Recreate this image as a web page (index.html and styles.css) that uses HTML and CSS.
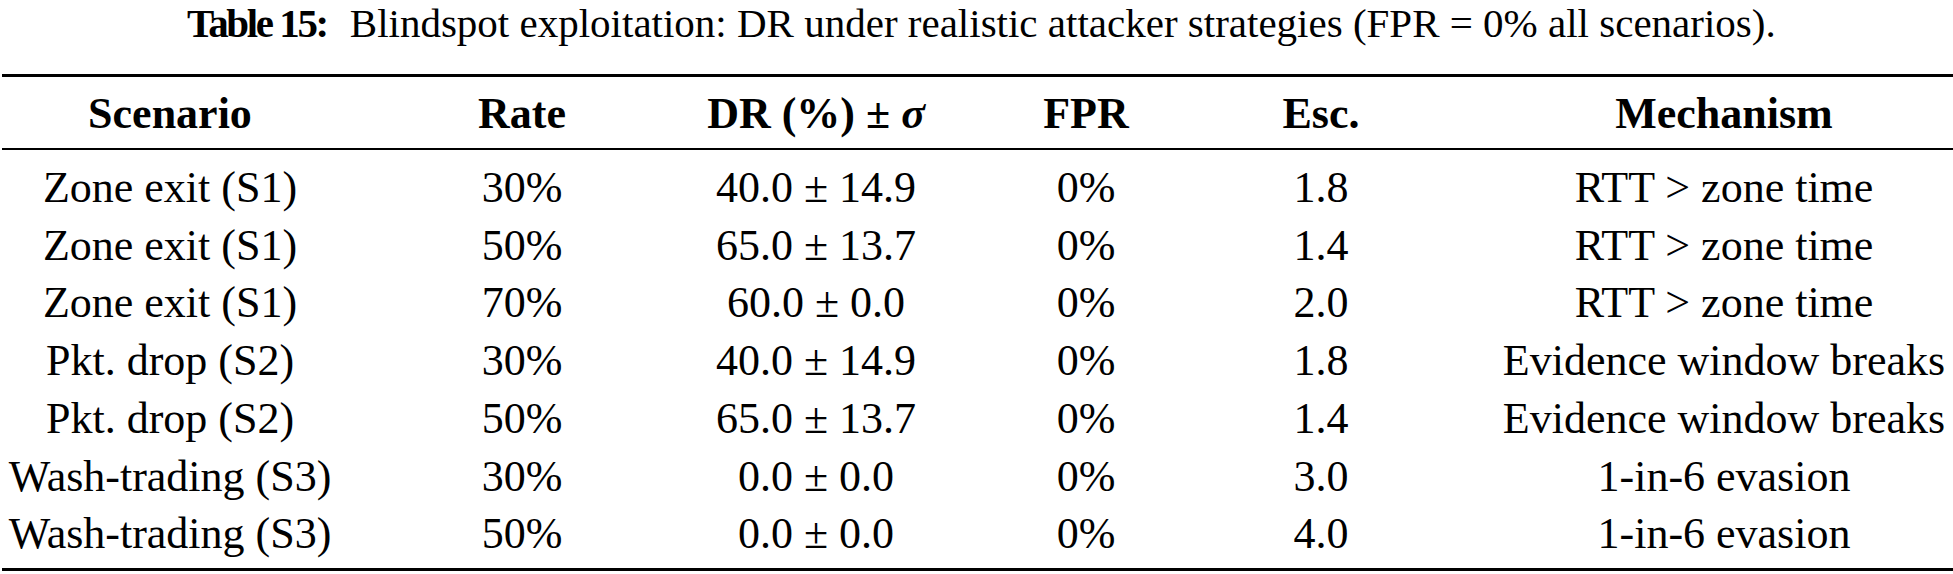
FILE: index.html
```html
<!DOCTYPE html>
<html lang="en">
<head>
<meta charset="utf-8">
<title>Table 15</title>
<link rel="stylesheet" href="styles.css">
</head>
<body>
<div class="page">
  <p class="caption"><span class="cap-label">Table 15:</span>Blindspot exploitation: DR under realistic attacker strategies (FPR = 0% all scenarios).</p>
  <div class="table">
    <div class="rule heavy"></div>
    <div class="head first">Scenario</div>
    <div class="head">Rate</div>
    <div class="head">DR (%) ± <i>σ</i></div>
    <div class="head">FPR</div>
    <div class="head">Esc.</div>
    <div class="head">Mechanism</div>
    <div class="rule light"></div>

    <div class="cell top">Zone exit (S1)</div><div class="cell top">30%</div><div class="cell top">40.0 ± 14.9</div><div class="cell top">0%</div><div class="cell top">1.8</div><div class="cell top">RTT &gt; zone time</div>
    <div class="cell">Zone exit (S1)</div><div class="cell">50%</div><div class="cell">65.0 ± 13.7</div><div class="cell">0%</div><div class="cell">1.4</div><div class="cell">RTT &gt; zone time</div>
    <div class="cell">Zone exit (S1)</div><div class="cell">70%</div><div class="cell">60.0 ± 0.0</div><div class="cell">0%</div><div class="cell">2.0</div><div class="cell">RTT &gt; zone time</div>
    <div class="cell">Pkt. drop (S2)</div><div class="cell">30%</div><div class="cell">40.0 ± 14.9</div><div class="cell">0%</div><div class="cell">1.8</div><div class="cell">Evidence window breaks</div>
    <div class="cell">Pkt. drop (S2)</div><div class="cell">50%</div><div class="cell">65.0 ± 13.7</div><div class="cell">0%</div><div class="cell">1.4</div><div class="cell">Evidence window breaks</div>
    <div class="cell">Wash-trading (S3)</div><div class="cell">30%</div><div class="cell">0.0 ± 0.0</div><div class="cell">0%</div><div class="cell">3.0</div><div class="cell">1-in-6 evasion</div>
    <div class="cell bottom">Wash-trading (S3)</div><div class="cell bottom">50%</div><div class="cell bottom">0.0 ± 0.0</div><div class="cell bottom">0%</div><div class="cell bottom">4.0</div><div class="cell bottom">1-in-6 evasion</div>
    <div class="rule heavy"></div>
  </div>
</div>
</body>
</html>
```

FILE: styles.css
```css
html {
  overflow: hidden;
  background: #ffffff;
}
body {
  margin: 0;
  background: #ffffff;
  color: #000000;
  font-family: "Liberation Serif", "Times New Roman", serif;
}
.page {
  width: 1953px;
  height: 574px;
  overflow: hidden;
}
.caption {
  margin: 0;
  padding-left: 187px;
  font-size: 41px;
  line-height: 46px;
  height: 46px;
  white-space: nowrap;
}
.cap-label {
  font-weight: bold;
  letter-spacing: -2.4px;
  margin-right: 23px;
}
.table {
  margin-top: 28px;
  margin-left: 2px;
  display: grid;
  grid-template-columns: 336px 368px 220px 320px 150px 656px;
  font-size: 44px;
  line-height: 57.75px;
}
.rule {
  grid-column: 1 / -1;
  background: #000000;
}
.rule.heavy {
  height: 3px;
}
.rule.light {
  height: 2px;
}
.head {
  justify-self: center;
  font-weight: bold;
  white-space: nowrap;
  padding-top: 8px;
  padding-bottom: 5px;
}
.cell {
  justify-self: center;
  white-space: nowrap;
}
.cell.top {
  padding-top: 9px;
}
.cell.bottom {
  padding-bottom: 5px;
}
```
